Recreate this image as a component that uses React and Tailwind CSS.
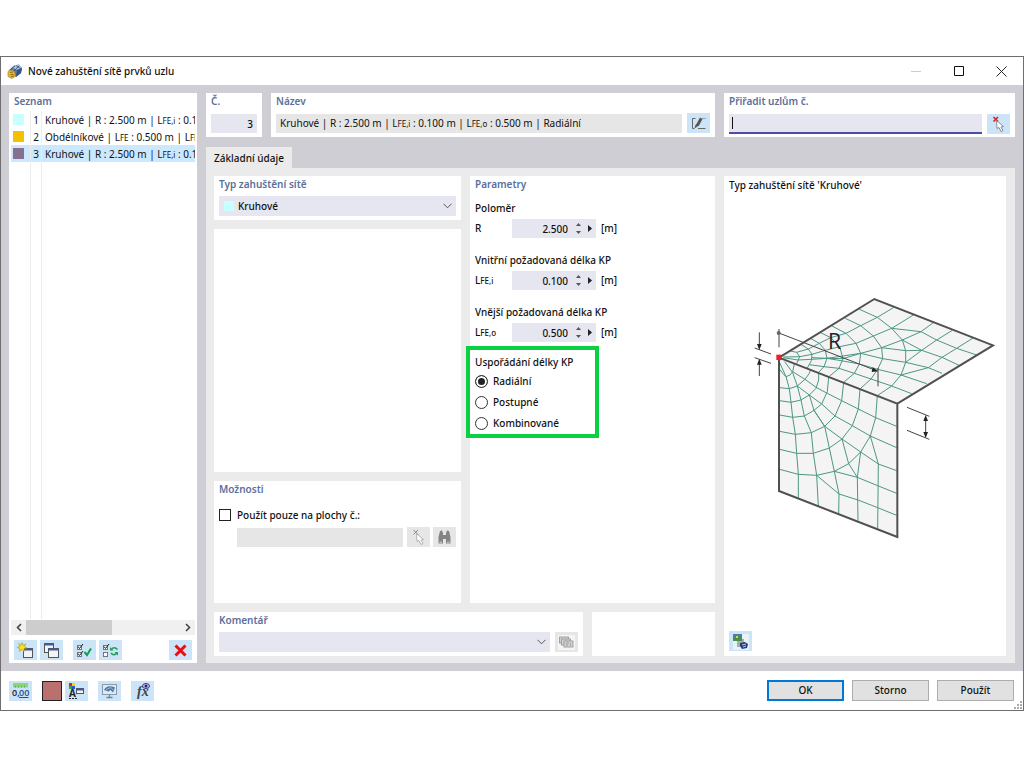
import React, { useState } from "react";
import { clsx } from "clsx";

const sub = "text-[8px]";
const field = "bg-[#e6e6f1] text-[10px] font-medium text-[#111] outline-none";
const iconButton = "flex h-5 w-[23px] shrink-0 items-center justify-center bg-[#cbe4f8]";
const disabledButton = "flex h-5 w-[23px] shrink-0 items-center justify-center bg-[#e6e6e6]";

function Card({ title, className, children }) {
  return (
    <section className={clsx("bg-white px-[5px]", className)}>
      {title && <h2 className="h-[17px] text-[10px] leading-[17px] font-semibold text-[#5b6f9b]">{title}</h2>}
      {children}
    </section>
  );
}

function Chevron() {
  return (
    <svg className="pointer-events-none absolute top-1/2 right-1 -translate-y-1/2" width="9" height="6" viewBox="0 0 9 6" fill="none" stroke="#555">
      <path d="M0.5 0.8 4.5 4.8 8.5 0.8" />
    </svg>
  );
}

function AppIcon() {
  return (
    <svg width="16" height="16" viewBox="0 0 16 16">
      <path d="M2 7 7 2.500 12 1.500 15 5 14 10 9 14 4 12Z" fill="#5f7fae" />
      <path d="M7 2.500 12 1.500 15 5 10 7 5 6Z" fill="#a9c1e0" />
      <path d="M3 7 8 3M6 9 12 3M9 12 14 6M5 5 11 8M9 2.500 14 6" stroke="#324c75" strokeWidth=".8" />
      <path d="M10 7 15 5 14 10 9 14Z" fill="#36527f" />
      <path d="M1 8.500C3 6.500 6.500 7 7.500 9L8.500 13 5 15.500 1 13.500Z" fill="#e2b93e" stroke="#a07a14" strokeWidth=".6" />
      <path d="M3 9.500 6 9M3.500 11.500 6.500 11.500M4 13.500 7 13" stroke="#8b6910" strokeWidth=".9" />
    </svg>
  );
}

function WindowGlyph({ x, y, w = 10, h = 8 }) {
  return (
    <g>
      <rect x={x} y={y} width={w} height={h} fill="#f4f4f4" stroke="#555" />
      <path d={`M${x} ${y + 1}h${w}`} stroke="#435a9d" strokeWidth="2" />
    </g>
  );
}

function NewIcon() {
  return (
    <svg width="17" height="17" viewBox="0 0 17 17">
      <WindowGlyph x={6.5} y={6.5} w={9} h={9} />
      <path d="M5 0.500 6 3.200 9 2 7.300 4.500 10 6 7 6.500 7 9.500 5 7.300 2.500 9.500 3 6.500 0 5.500 3 4.300 1.500 1.500 4 3.200Z" fill="#f7e315" stroke="#a99913" strokeWidth=".6" />
    </svg>
  );
}

function CopyIcon() {
  return (
    <svg width="17" height="17" viewBox="0 0 17 17">
      <WindowGlyph x={1.5} y={1.5} w={9} h={9} />
      <WindowGlyph x={5.5} y={6.5} w={10} h={9} />
    </svg>
  );
}

function CheckBoxes({ second }) {
  return (
    <g fill="none" stroke="#777">
      <rect x="1.500" y="3.500" width="4" height="4" fill="#fff" />
      <rect x="1.500" y="10.500" width="4" height="4" fill="#fff" />
      <path d="M2 4.500 3.500 6.500 7 2" stroke="#222" />
      {second && <path d="M2 11.500 3.500 13.500 7 9" stroke="#222" />}
    </g>
  );
}

function CheckAllIcon() {
  return (
    <svg width="17" height="17" viewBox="0 0 17 17">
      <CheckBoxes second />
      <path d="M8.500 10 11 13 15 6.500" fill="none" stroke="#10a04c" strokeWidth="2" />
    </svg>
  );
}

function InvertIcon() {
  return (
    <svg width="17" height="17" viewBox="0 0 17 17">
      <CheckBoxes />
      <path d="M9.500 7.500C11 5 13.500 5.500 15.500 7.500M15 11C13 13.500 10.500 13 9 11" fill="none" stroke="#24a058" strokeWidth="1.600" />
      <path d="M8 5v3.500h3.500zM16 13.500v-3.500h-3.500z" fill="#24a058" />
    </svg>
  );
}

function DeleteIcon() {
  return (
    <svg width="15" height="15" viewBox="0 0 15 15" stroke="#ee0c0c" strokeWidth="3">
      <path d="M2.500 2.500 12.500 12.500M12.500 2.500 2.500 12.500" />
    </svg>
  );
}

function PickIcon({ muted }) {
  return (
    <svg width="17" height="17" viewBox="0 0 17 17">
      <path d="M3.500 1 8 5.500M8 1 3.500 5.500" stroke={muted ? "#888" : "#e01c24"} strokeWidth={muted ? 1 : 1.6} />
      <path d="M6.500 4.500 7 12.500 9 11.500 11 15.500 13 14.500 11 11 13.500 10.500Z" fill="#fff" stroke={muted ? "#aaa" : "#808080"} strokeWidth=".9" />
    </svg>
  );
}

function EditIcon() {
  return (
    <svg width="17" height="17" viewBox="0 0 17 17" fill="none" stroke="#666">
      <path d="M5.500 3.500H2.500V13.500H4.500M8 13.500H15.500M12.500 3.500h1M14.500 3.500h1" />
      <path d="M6 12.500 6.500 9 10 2.500 12.500 4 9 10.500Z" fill="#555" stroke="none" />
      <path d="M5 13 6.500 9" stroke="#444" />
    </svg>
  );
}

function BinocularsIcon() {
  return (
    <svg width="17" height="17" viewBox="0 0 17 17" fill="#858585">
      <path d="M4 2 6 1.500 7 4V14.500H2.500V8ZM13 2 11 1.500 10 4V14.500H14.500V8ZM7 6h3v4H7z" />
      <path d="M3.500 12.500h2.500v1.500H3.500zM11 12.500h2.500v1.500H11z" fill="#bbb" />
    </svg>
  );
}

function CommentsIcon() {
  return (
    <svg width="17" height="17" viewBox="0 0 17 17">
      <path d="M0 1h17v15H0z" fill="#f5f5f5" />
      <g fill="#d2d2d2" stroke="#9a9a9a" strokeWidth=".9">
        <rect x="1.500" y="3" width="9" height="6" />
        <rect x="3.500" y="5" width="9" height="6" />
        <rect x="6" y="7" width="9" height="6" />
      </g>
      <path d="M8 9h3M8 11h2M12.500 9.500v2" stroke="#999" />
    </svg>
  );
}

function UnitsIcon() {
  return (
    <svg width="19" height="17" viewBox="0 0 19 17">
      <path d="M2 1h15v4.500H2z" fill="#8cd67b" />
      <path d="M4.500 3.500v2M7.500 3.500v2M10.500 3.500v2M13.500 3.500v2" stroke="#62ad55" />
      <text x="1" y="14" fontSize="9" fontWeight="600" fill="#222" fontFamily="Open Sans, sans-serif">0,</text>
      <text x="8" y="14" fontSize="9" fontWeight="600" fill="#234d94" fontFamily="Open Sans, sans-serif">00</text>
      <path d="M8 15.500h9.500" stroke="#234d94" />
    </svg>
  );
}

function DisplayTypeIcon() {
  return (
    <svg width="19" height="18" viewBox="0 0 19 18">
      <path d="M2 1h3v3H2z" fill="#e62020" />
      <path d="M5 1h3v3H5z" fill="#f0d910" />
      <path d="M2 4h3v3H2z" fill="#27a63a" />
      <path d="M5 4h3v3H5z" fill="#2857d2" />
      <text x="2" y="15" fontSize="10" fontWeight="700" fill="#222" fontFamily="Open Sans, sans-serif">A</text>
      <path d="M2 16.500h8" stroke="#222" strokeDasharray="2 1" />
      <WindowGlyph x={9.5} y={6.5} w={7} h={5} />
    </svg>
  );
}

function MonitorIcon() {
  return (
    <svg width="17" height="17" viewBox="0 0 17 17">
      <rect x="1.500" y="2.500" width="14" height="10" fill="#d9eaf8" stroke="#8a99a8" />
      <path d="M3 8C5 4 9 3.500 14 5.500L12 10.500 9.500 8 7.500 9.500Z" fill="#54779f" />
      <path d="M5 7.500 10 5.500 12 8" fill="none" stroke="#9cb8d5" />
      <path d="M8.500 13v2M5.500 15.500h6" stroke="#75828f" strokeWidth="1.300" />
    </svg>
  );
}

function FormulaIcon() {
  return (
    <svg width="19" height="18" viewBox="0 0 19 18">
      <text x="4" y="14" fontSize="14" fontStyle="italic" fontWeight="600" fill="#3c4650" fontFamily="Liberation Serif, serif">fx</text>
      <ellipse cx="13" cy="4" rx="3.500" ry="2.500" fill="#c9c5ed" stroke="#3b3b85" />
      <circle cx="13" cy="4" r="1.500" fill="#24246e" />
    </svg>
  );
}

function PictureIcon() {
  return (
    <svg width="17" height="17" viewBox="0 0 17 17">
      <path d="M1 1h16v16H1z" fill="#eaf2f8" />
      <path d="M5 6h7v8H5z" fill="#a3adb0" />
      <rect x="1" y="1" width="9" height="7" fill="#4a8f43" />
      <path d="M1 1h9v3l-3-1-2 2-4-1z" fill="#4c7fa8" />
      <path d="M4 3h2v2H4z" fill="#d4d84e" />
      <path d="M8 10 13 9 16 11 15 15 10 16 8 13Z" fill="#263f78" />
      <path d="M10 12 14 11M11 14l3-1" stroke="#b3c9ea" />
    </svg>
  );
}

const meshLines = [
  // vertical face, rings
  "119,268 129,281 138,290 150,285 158,275 163,252",
  "119,323 148,326 172,318 195,298 208,280 212,268",
  "119,362 153,367 183,360 208,345 228,325 236,300 236,281",
  "119,405 158,412 193,408 222,391 245,372 262,335 266,291",
  "119,454 166,463 214,458 254,439 285,408 305,362 311,308",
  "119,508 170,520 220,520 268,504 306,477 337,437 355,387 360,327",
  "119,568 175,583 230,586 283,574 326,551 362,516 391,468 407,413 412,347",
  // vertical face, rays
  "119,248 138,290 148,326 153,367 158,412 166,463 170,520 175,583 175,654",
  "134,245 158,278 172,318 183,360 193,408 214,458 220,520 230,586 235,678",
  "172,318 208,345 222,391 254,439 268,504 283,574 297,642 296,702",
  "158,275 195,298 228,322 262,340 305,362 355,387 407,413 470,439",
  "208,345 245,372 285,408 337,437 391,468 470,503",
  "222,391 254,439 306,477 362,516 415,552 470,572",
  "306,477 326,551 352,592 354,722",
  "362,516 352,592",
  "391,468 415,552 413,746",
  "283,574 352,592 413,617 470,640",
  "230,586 297,642 354,660 413,683 470,706",
  // horizontal face, rings
  "152,213 170,217 179,230 170,251",
  "184,194 205,207 216,223 214,242 202,264",
  "213,176 238,190 256,211 261,235 252,260 236,277",
  "242,158 272,173 299,200 309,236 297,265 268,289",
  "276,138 318,160 348,190 362,220 358,252 343,280 312,306",
  "316,115 362,137 400,168 425,203 428,236 413,268 393,297 362,325",
  "358,88 412,112 455,145 487,180 497,212 497,247 483,285 455,318 412,347",
  // horizontal face, rays
  "170,217 205,207 238,190 272,173 318,160 362,137 412,112 460,83",
  "130,231 179,230 216,223 256,211 299,200 348,190 400,168 455,145 520,105",
  "216,233 261,235 362,220 425,203 487,180 543,155 580,128",
  "130,233 174,240 214,238 261,235 309,236 362,220 428,236 497,247 565,263 606,280",
  "208,254 252,260 297,265 343,280 393,297 455,318 515,341",
  "261,235 309,243 358,252 413,268 483,285 560,311",
  "425,203 497,212 545,211",
  "487,180 545,211 606,232 657,256",
  "455,145 543,155 590,180 650,205 710,225",
  "497,247 545,211 590,180 637,151",
  "483,285 565,263 606,232 650,205 699,174",
];

function MeshDrawing() {
  return (
    <svg className="mt-[99px] ml-[21px] block w-[250px] shrink-0" viewBox="30 39 750 750" role="img" aria-label="Kruhové">
      <path d="M117 233 403 57 759 196 472 371ZM117 233 472 371V771L117 633Z" fill="#f4f4f4" />
      <g fill="none" stroke="#4d9683" strokeWidth="3">
        {meshLines.map((points, i) => (
          <polyline key={i} points={points} />
        ))}
      </g>
      <path d="M117 233 403 57 759 196 472 371ZM117 233 472 371V771L117 633Z" fill="none" stroke="#505050" strokeWidth="6" />
      <g stroke="#444" strokeWidth="3" fill="none">
        <path d="M117 147V202M114 158 412 273M414 264V319" />
        <path d="M44 204 93 222M44 233 93 250M58 157V195M58 288V250" />
        <path d="M501 382 568 409M501 451 568 478M557 415V465" />
      </g>
      <g fill="#222">
        <path d="M414 274 398 262 395 276ZM58 210 51 192H65ZM58 236 51 254H65ZM557 405 550 423H564ZM557 474 550 456H564Z" />
        <circle cx="116" cy="159" r="6" fill="#666" />
      </g>
      <text x="264" y="207" fontSize="64" fontWeight="400" fill="#222" fontFamily="Open Sans, sans-serif">R</text>
      <path d="M109 224h16v16h-16z" fill="#e8202a" />
    </svg>
  );
}

const items = [
  { id: 1, swatch: "bg-[#c8ffff]", text: <>Kruhové | R : 2.500 m | L<span className={sub}>FE,i</span> : 0.100 m</> },
  { id: 2, swatch: "bg-[#f5c000]", text: <>Obdélníkové | L<span className={sub}>FE</span> : 0.500 m | L<span className={sub}>FE,o</span></> },
  { id: 3, swatch: "bg-[#857090]", text: <>Kruhové | R : 2.500 m | L<span className={sub}>FE,i</span> : 0.100 m</> },
];

function ListPanel() {
  const [active, setActive] = useState(3);
  return (
    <Card title="Seznam" className="flex w-[188px] shrink-0 flex-col">
      <div className="-mx-[3px] flex flex-1 flex-col pt-[1px]">
        <ul>
          {items.map((item) => (
            <li key={item.id}>
              <button
                type="button"
                onClick={() => setActive(item.id)}
                className={clsx("flex h-[17px] w-full items-stretch overflow-hidden text-left text-[10px] leading-[18px] font-normal whitespace-nowrap", active === item.id && "bg-[#cce8ff]")}
              >
                <span className="flex w-5 shrink-0 items-center border-r border-[#ececec] pl-0.5">
                  <span className={clsx("h-[11px] w-[11px]", item.swatch)} />
                </span>
                <span className="w-[11px] shrink-0 border-r border-[#ececec] pr-0.5 text-right">{item.id}</span>
                <span className="pl-[3px]">{item.text}</span>
              </button>
            </li>
          ))}
        </ul>
        <div className="flex flex-1">
          <div className="w-5 border-r border-[#ececec]" />
          <div className="w-[11px] border-r border-[#ececec]" />
        </div>
        <div className="mt-px flex h-[15px] items-center bg-[#f0f0f0]">
          <button type="button" aria-label="Posunout vlevo" className="flex w-[15px] justify-center">
            <svg width="6" height="9" viewBox="0 0 6 9" fill="none" stroke="#444" strokeWidth="1.600"><path d="M5 1 1.500 4.500 5 8" /></svg>
          </button>
          <div className="h-full flex-1">
            <div className="h-full w-[56%] bg-[#cdcdcd]" />
          </div>
          <button type="button" aria-label="Posunout vpravo" className="flex w-[15px] justify-center">
            <svg width="6" height="9" viewBox="0 0 6 9" fill="none" stroke="#444" strokeWidth="1.600"><path d="M1 1 4.500 4.500 1 8" /></svg>
          </button>
        </div>
      </div>
      <div className="flex gap-[3px] pt-[5px] pb-[3px]">
        <button type="button" aria-label="Nový" className={iconButton}><NewIcon /></button>
        <button type="button" aria-label="Kopírovat" className={iconButton}><CopyIcon /></button>
        <button type="button" aria-label="Vybrat vše" className={clsx(iconButton, "ml-[7px]")}><CheckAllIcon /></button>
        <button type="button" aria-label="Obrátit výběr" className={iconButton}><InvertIcon /></button>
        <button type="button" aria-label="Odstranit" className={clsx(iconButton, "ml-auto")}><DeleteIcon /></button>
      </div>
    </Card>
  );
}

function LengthField({ id, title, symbol, value }) {
  const [v, setV] = useState(value);
  const step = (d) => setV((Number(v) + d).toFixed(3));
  return (
    <div>
      <label htmlFor={id} className="block h-4 leading-4">{title}</label>
      <div className="mt-[3px] flex h-[19px] items-center">
        <span className="w-[37px]">{symbol}</span>
        <div className="flex h-full w-[84px] items-center bg-[#e6e6f1]">
          <input id={id} value={v} onChange={(e) => setV(e.target.value)} className={clsx(field, "h-full w-14 text-right")} />
          <span className="ml-2 flex flex-col gap-[5px]">
            <button type="button" aria-label="Zvýšit" onClick={() => step(0.1)}><svg className="block" width="5" height="3" viewBox="0 0 5 3" fill="#555"><path d="M0 3 2.500 0 5 3z" /></svg></button>
            <button type="button" aria-label="Snížit" onClick={() => step(-0.1)}><svg className="block" width="5" height="3" viewBox="0 0 5 3" fill="#555"><path d="M0 0 2.500 3 5 0z" /></svg></button>
          </span>
          <button type="button" aria-label="Další možnosti" className="ml-[7px]"><svg className="block" width="4" height="7" viewBox="0 0 4 7" fill="#222"><path d="M0 0 4 3.500 0 7z" /></svg></button>
        </div>
        <span className="ml-[5px]">[m]</span>
      </div>
    </div>
  );
}

function Parameters() {
  const [mode, setMode] = useState("Radiální");
  return (
    <Card title="Parametry" className="w-[245px] shrink-0">
      <div className="mt-[7px] flex flex-col gap-[14px]">
        <LengthField id="radius" title="Poloměr" symbol="R" value="2.500" />
        <LengthField id="inner" title="Vnitřní požadovaná délka KP" symbol={<>L<span className={sub}>FE,i</span></>} value="0.100" />
        <LengthField id="outer" title="Vnější požadovaná délka KP" symbol={<>L<span className={sub}>FE,o</span></>} value="0.500" />
      </div>
      <div role="radiogroup" aria-labelledby="mode-title" className="mt-1 -ml-[9px] flex w-[133px] flex-col gap-px border-4 border-[#0bd043] px-[5px] pt-1 pb-px">
        <div id="mode-title" className="h-4 leading-4">Uspořádání délky KP</div>
        {["Radiální", "Postupné", "Kombinované"].map((name) => (
          <label key={name} className="flex h-5 items-center gap-[5px]">
            <input
              type="radio"
              name="mode"
              checked={mode === name}
              onChange={() => setMode(name)}
              className="h-[13px] w-[13px] appearance-none rounded-full border border-[#333] bg-white checked:bg-[#222] checked:shadow-[inset_0_0_0_2px_white]"
            />
            {name}
          </label>
        ))}
      </div>
    </Card>
  );
}

function FooterButton({ primary, children }) {
  return (
    <button type="button" className={clsx("h-[21px] w-[77px] bg-[#e1e1e1]", primary ? "border-2 border-[#0078d7]" : "border border-[#adadad]")}>
      {children}
    </button>
  );
}

export default function App() {
  const [nodes, setNodes] = useState("");
  return (
    <div className="min-h-screen bg-white pt-14 font-['Noto_Sans','Open_Sans',sans-serif] text-[10px] font-medium text-[#111]">
      <main className="flex min-h-[655px] flex-col border border-[#6e6e6e]">
        <header className="flex h-7 items-center pl-[6px]">
          <AppIcon />
          <h1 className="ml-[5px] flex-1">Nové zahuštění sítě prvků uzlu</h1>
          <div className="flex">
            <button type="button" aria-label="Minimalizovat" className="flex w-[42px] justify-center"><svg width="10" height="10" viewBox="0 0 10 10" stroke="#ccc"><path d="M0 5.500h10" /></svg></button>
            <button type="button" aria-label="Maximalizovat" className="flex w-[43px] justify-center"><svg width="10" height="10" viewBox="0 0 10 10" fill="none" stroke="#111"><path d="M.5.5h9v9h-9z" /></svg></button>
            <button type="button" aria-label="Zavřít" className="flex w-[43px] justify-center"><svg width="11" height="11" viewBox="0 0 11 11" stroke="#222"><path d="M.5.5 10.500 10.500M10.500.5.5 10.500" /></svg></button>
          </div>
        </header>

        <div className="flex flex-1 gap-[9px] bg-[#cfced4] p-2">
          <ListPanel />

          <div className="flex min-w-0 flex-1 flex-col">
            <div className="flex gap-[9px]">
              <Card title="Č." className="w-14 pb-1">
                <input aria-label="Č." defaultValue="3" className={clsx(field, "mt-1 block h-[19px] w-full px-1 text-right")} />
              </Card>
              <Card title="Název" className="min-w-0 flex-1">
                <div className="flex items-center gap-[5px] pt-[3px]">
                  <output aria-label="Název" className="h-[19px] flex-1 bg-[#e6e6e6] pl-[4px] leading-[19px] font-normal whitespace-nowrap">
                    Kruhové | R : 2.500 m | L<span className={sub}>FE,i</span> : 0.100 m | L<span className={sub}>FE,o</span> : 0.500 m | Radiální
                  </output>
                  <button type="button" aria-label="Upravit název" className={iconButton}><EditIcon /></button>
                </div>
              </Card>
              <Card title="Přiřadit uzlům č." className="w-[291px]">
                <div className="flex items-center gap-[5px] pt-1">
                  <span className="flex h-5 flex-1 items-center border-b-2 border-[#4d4da8] bg-[#e6e6f1] pl-[3px]">
                    <span className="h-3 w-px bg-[#111]" />
                    <input aria-label="Přiřadit uzlům č." value={nodes} onChange={(e) => setNodes(e.target.value)} className={clsx(field, "h-full min-w-0 flex-1")} />
                  </span>
                  <button type="button" aria-label="Vybrat uzly" className={iconButton}><PickIcon /></button>
                </div>
              </Card>
            </div>

            <div role="tablist" className="mt-[10px] flex">
              <button type="button" role="tab" aria-selected="true" className="h-[21px] bg-[#ebebeb] px-2 pt-[2px]">Základní údaje</button>
            </div>

            <div className="flex flex-1 gap-[9px] bg-[#ebebeb] pt-2 pr-[9px] pb-[7px] pl-2">
              <div className="flex min-w-0 flex-1 flex-col gap-[9px]">
                <div className="flex flex-1 gap-[9px]">
                  <div className="flex min-w-0 flex-1 flex-col gap-[9px]">
                    <Card title="Typ zahuštění sítě" className="pb-1">
                      <div className="relative mt-[3px] h-5">
                        <select aria-label="Typ zahuštění sítě" className={clsx(field, "h-full w-full appearance-none pl-[19px]")}>
                          <option>Kruhové</option>
                          <option>Obdélníkové</option>
                        </select>
                        <span className="absolute top-[5px] left-[5px] h-[10px] w-[10px] bg-[#c8ffff]" />
                        <Chevron />
                      </div>
                    </Card>
                    <Card className="flex-1" />
                    <Card title="Možnosti" className="h-[122px]">
                      <label className="mt-[9px] flex h-4 items-center gap-[6px]">
                        <input type="checkbox" className="h-3 w-3 appearance-none border border-[#222] bg-white checked:bg-[#222]" />
                        Použít pouze na plochy č.:
                      </label>
                      <div className="mt-[4px] flex items-center pl-[18px]">
                        <input aria-label="Plochy č." disabled className="h-[19px] min-w-0 flex-1 bg-[#e6e6e6]" />
                        <button type="button" disabled aria-label="Vybrat plochy" className={clsx(disabledButton, "ml-1")}><PickIcon muted /></button>
                        <button type="button" disabled aria-label="Najít" className={clsx(disabledButton, "ml-[3px]")}><BinocularsIcon /></button>
                      </div>
                    </Card>
                  </div>
                  <Parameters />
                </div>
                <div className="flex gap-[9px]">
                  <Card title="Komentář" className="flex-1 pb-1">
                    <div className="mt-[3px] flex gap-[5px]">
                      <div className="relative h-5 flex-1">
                        <select aria-label="Komentář" className={clsx(field, "h-full w-full appearance-none")} />
                        <Chevron />
                      </div>
                      <button type="button" disabled aria-label="Komentáře" className={disabledButton}><CommentsIcon /></button>
                    </div>
                  </Card>
                  <Card className="w-[123px]" />
                </div>
              </div>
              <Card className="flex w-[282px] shrink-0 flex-col pb-[5px]">
                <p className="mt-px h-[17px] leading-[17px]">Typ zahuštění sítě 'Kruhové'</p>
                <MeshDrawing />
                <button type="button" aria-label="Obrázek" className={clsx(iconButton, "mt-auto")}><PictureIcon /></button>
              </Card>
            </div>
          </div>
        </div>

        <footer className="relative flex h-[39px] items-center gap-[10px] pr-[9px] pl-2">
          <button type="button" aria-label="Jednotky" className={iconButton}><UnitsIcon /></button>
          <div className="flex gap-[3px]">
            <button type="button" aria-label="Barva" className="h-5 w-5 border border-[#222] bg-[#bb7070]" />
            <button type="button" aria-label="Typ zobrazení" className={iconButton}><DisplayTypeIcon /></button>
          </div>
          <button type="button" aria-label="Zobrazení" className={iconButton}><MonitorIcon /></button>
          <button type="button" aria-label="Vzorec" className={iconButton}><FormulaIcon /></button>
          <div className="ml-auto flex gap-2">
            <FooterButton primary>OK</FooterButton>
            <FooterButton>Storno</FooterButton>
            <FooterButton>Použít</FooterButton>
          </div>
          <svg className="absolute right-px bottom-px" width="8" height="8" viewBox="0 0 8 8" fill="#aaa">
            <path d="M6 0h2v2H6zM3 3h2v2H3zM6 3h2v2H6zM0 6h2v2H0zM3 6h2v2H3zM6 6h2v2H6z" />
          </svg>
        </footer>
      </main>
    </div>
  );
}
